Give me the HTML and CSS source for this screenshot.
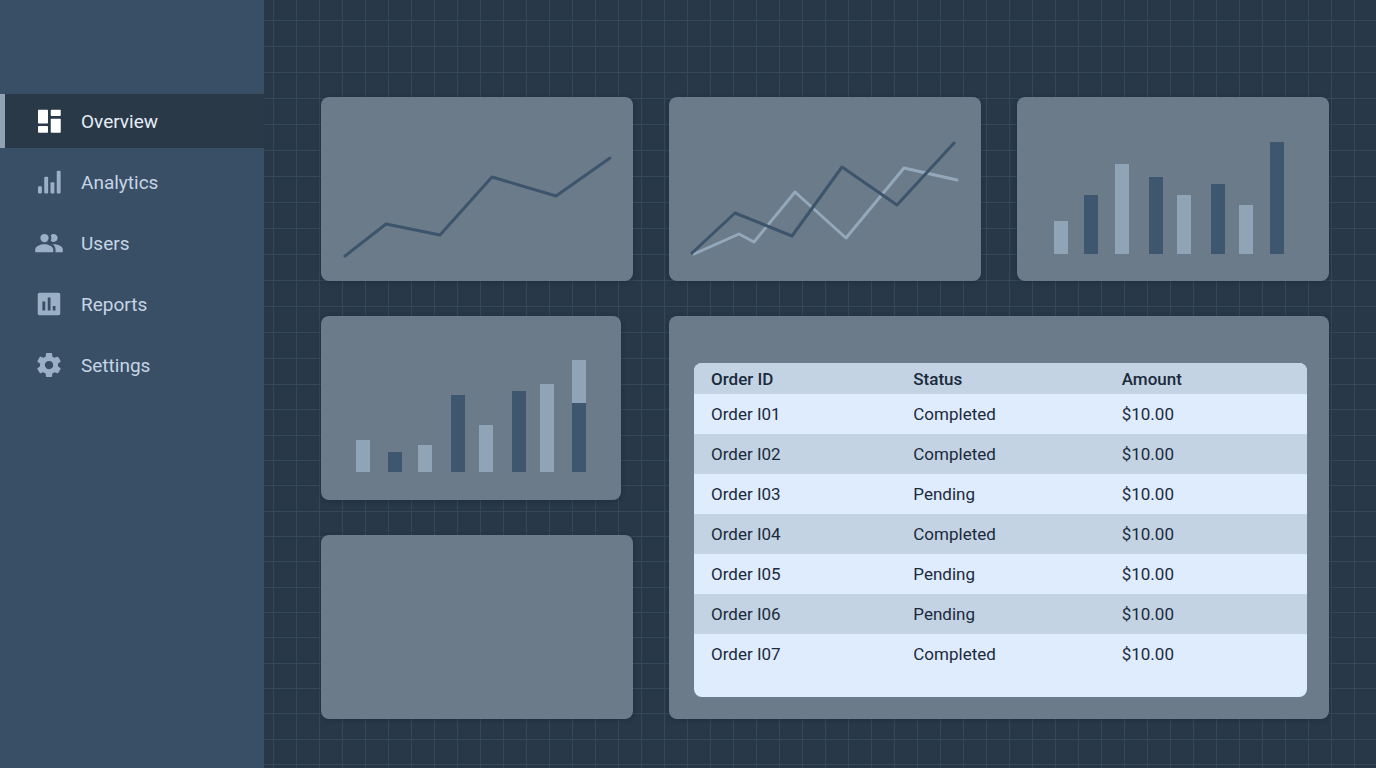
FILE: index.html
```html
<!DOCTYPE html>
<html lang="en">
<head>
    <meta charset="UTF-8" />
    <meta name="viewport" content="width=device-width, initial-scale=1.0"/>
    <title>Dashboard</title>
    <link rel="stylesheet" href="styles.css">
</head>
<body>

    <!-- Sidebar -->
    <nav class="sidebar" aria-label="Main">
        <a href="#overview" class="nav-item active" aria-current="page">
            <svg class="nav-icon" viewBox="0 0 24 24" aria-hidden="true">
                <rect x="3.2" y="3" width="8" height="11" rx="0.6"/>
                <rect x="3.2" y="16" width="8" height="5.400" rx="0.6"/>
                <rect x="13.400" y="3" width="8" height="5" rx="0.6"/>
                <rect x="13.400" y="10.200" width="8" height="11.200" rx="0.6"/>
            </svg>
            Overview
        </a>
        <a href="#analytics" class="nav-item">
            <svg class="nav-icon" viewBox="0 0 24 24" aria-hidden="true">
                <rect x="3.2" y="15.4" width="3.1" height="5.8" rx="0.8"/>
                <rect x="8.2" y="7.8" width="3.1" height="13.4" rx="0.8"/>
                <rect x="13.2" y="12.2" width="3.1" height="9" rx="0.8"/>
                <rect x="18.2" y="3" width="3.1" height="18.2" rx="0.8"/>
            </svg>
            Analytics
        </a>
        <a href="#users" class="nav-item">
            <svg class="nav-icon" viewBox="0 0 24 24" aria-hidden="true">
                <circle cx="8.4" cy="8" r="3.3"/>
                <path d="M13.400 10.200a4.800 4.800 0 0 0 0-4.400 3.200 3.200 0 1 1 0 4.400z"/>
                <path d="M1 19.3V17c0-2.4 4.4-4 7.2-4s7.2 1.600 7.200 4v2.300z"/>
                <path d="M17.200 19.300V17c0-1.600-.8-2.900-2-3.900 3.400-.1 7.800 1.300 7.800 3.900v2.300z"/>
            </svg>
            Users
        </a>
        <a href="#reports" class="nav-item">
            <svg class="nav-icon" viewBox="0 0 24 24" aria-hidden="true">
                <path d="M19.600 3H4.400C3.600 3 3 3.600 3 4.400v15.200c0 .8.6 1.400 1.400 1.400h15.200c.8 0 1.400-.6 1.400-1.400V4.400c0-.8-.6-1.400-1.400-1.400zM9 17.200H6.700V10H9v7.200zm4.200 0H11V6.800h2.200v10.400zm4 0H15v-3.700h2.200v3.700z"/>
            </svg>
            Reports
        </a>
        <a href="#settings" class="nav-item">
            <svg class="nav-icon" viewBox="0 0 24 24" aria-hidden="true">
                <path d="M19.140 12.940c.04-.3.060-.61.060-.94 0-.32-.02-.64-.07-.94l2.030-1.580c.18-.14.230-.41.120-.61l-1.920-3.320c-.12-.22-.37-.29-.59-.22l-2.390.96c-.5-.38-1.030-.7-1.620-.94l-.36-2.540c-.04-.24-.24-.41-.48-.41h-3.840c-.24 0-.43.17-.47.41l-.36 2.540c-.59.240-1.130.570-1.620.94l-2.390-.96c-.22-.08-.47 0-.59.220L2.740 8.870c-.12.210-.08.470.12.610l2.030 1.580c-.05.300-.09.630-.09.940s.02.640.070.940l-2.030 1.580c-.18.140-.23.410-.12.610l1.920 3.320c.12.220.37.290.59.220l2.390-.96c.5.380 1.030.7 1.620.94l.36 2.540c.05.240.24.410.48.410h3.840c.24 0 .44-.17.470-.41l.36-2.540c.59-.24 1.130-.56 1.620-.94l2.390.96c.22.080.47 0 .59-.22l1.920-3.320c.12-.22.070-.47-.12-.61l-2.010-1.580zM12 15.300A3.300 3.300 0 1 1 12 8.700a3.300 3.300 0 0 1 0 6.600z"/>
            </svg>
            Settings
        </a>
    </nav>

    <!-- Cards -->
    <main class="dashboard">
        <section class="card">
            <svg class="chart" viewBox="0 0 312 184" role="img" aria-label="Line chart">
                <polyline class="line-dark" points="24,159 65,127 119,138 171,80 235,99 289,61"/>
            </svg>
        </section>

        <section class="card">
            <svg class="chart" viewBox="0 0 312 184" role="img" aria-label="Line chart with two series">
                <polyline class="line-light" points="25,157 70,137 85,145 126,95 177,141 235,71 288,83"/>
                <polyline class="line-dark" points="23,156 66,116 123,139 173,70 228,108 285,46"/>
            </svg>
        </section>

        <section class="card">
            <svg class="chart" viewBox="0 0 312 184" role="img" aria-label="Bar chart">
                <rect class="bar-light" x="37" y="124" width="14" height="33"/>
                <rect class="bar-dark" x="67" y="98" width="14" height="59"/>
                <rect class="bar-light" x="98" y="67" width="14" height="90"/>
                <rect class="bar-dark" x="132" y="80" width="14" height="77"/>
                <rect class="bar-light" x="160" y="98" width="14" height="59"/>
                <rect class="bar-dark" x="194" y="87" width="14" height="70"/>
                <rect class="bar-light" x="222" y="108" width="14" height="49"/>
                <rect class="bar-dark" x="253" y="45" width="14" height="112"/>
            </svg>
        </section>

        <section class="card card-narrow">
            <svg class="chart" viewBox="0 0 300 184" role="img" aria-label="Stacked bar chart">
                <rect class="bar-light" x="35" y="124" width="14" height="32"/>
                <rect class="bar-dark" x="67" y="136" width="14" height="20"/>
                <rect class="bar-light" x="97" y="129" width="14" height="27"/>
                <rect class="bar-dark" x="130" y="79" width="14" height="77"/>
                <rect class="bar-light" x="158" y="109" width="14" height="47"/>
                <rect class="bar-dark" x="191" y="75" width="14" height="81"/>
                <rect class="bar-light" x="219" y="68" width="14" height="88"/>
                <rect class="bar-light" x="251" y="44" width="14" height="43"/>
                <rect class="bar-dark" x="251" y="87" width="14" height="69"/>
            </svg>
        </section>

        <section class="card card-table">
            <div class="table-box">
                <table class="orders">
                    <thead>
                        <tr><th scope="col">Order ID</th><th scope="col" class="col-status">Status</th><th scope="col">Amount</th></tr>
                    </thead>
                    <tbody>
                        <tr><td>Order I01</td><td>Completed</td><td>$10.00</td></tr>
                        <tr><td>Order I02</td><td>Completed</td><td>$10.00</td></tr>
                        <tr><td>Order I03</td><td>Pending</td><td>$10.00</td></tr>
                        <tr><td>Order I04</td><td>Completed</td><td>$10.00</td></tr>
                        <tr><td>Order I05</td><td>Pending</td><td>$10.00</td></tr>
                        <tr><td>Order I06</td><td>Pending</td><td>$10.00</td></tr>
                        <tr><td>Order I07</td><td>Completed</td><td>$10.00</td></tr>
                    </tbody>
                </table>
            </div>
        </section>

        <section class="card"></section>
    </main>

</body>
</html>
```
FILE: styles.css
```css
* {
    box-sizing: border-box;
}

body {
    margin: 0;
    min-height: 100vh;
    display: flex;
    background: #283848;
    font-family: Roboto, 'Liberation Sans', sans-serif;
}

/* Sidebar */
.sidebar {
    flex: 0 0 264px;
    display: flex;
    flex-direction: column;
    gap: 7px;
    padding-top: 94px;
    background: #394f66;
}

.nav-item {
    display: flex;
    align-items: center;
    gap: 17px;
    height: 54px;
    padding-left: 29px;
    border-left: 5px solid transparent;
    color: #c6d5e5;
    font-size: 19px;
    text-decoration: none;
}

.nav-item:hover {
    background: #324659;
}

.nav-item.active {
    background: #293948;
    border-left-color: #8fa3b5;
    color: #e6eef8;
}

.nav-icon {
    width: 30px;
    height: 30px;
    fill: #9bb0c4;
}

.active .nav-icon {
    fill: #fff;
}

/* Main area with the grid paper behind the cards */
.dashboard {
    flex: 1;
    display: grid;
    grid-template-columns: repeat(3, minmax(0, 1fr));
    grid-template-rows: repeat(3, minmax(184px, 1fr));
    gap: 35px 36px;
    padding: 97px 47px 49px 57px;
    background-image:
        linear-gradient(90deg, #364858 1px, transparent 1px),
        repeating-linear-gradient(#364858 0 1px, transparent 1px 26px),
        repeating-linear-gradient(#364858 0 1px, transparent 1px 25px, #364858 25px 26px, transparent 26px 51px, #364858 51px 52px, transparent 52px 76px);
    background-size: 23px 100%, 100% 364px, 100% 100%;
    background-position: 9px 0, 0 20px, 0 384px;
    background-repeat: repeat-x, no-repeat, no-repeat;
}

.card {
    background: #6c7b8a;
    border-radius: 8px;
    box-shadow: 0 1px 4px rgba(20, 32, 46, 0.4);
}

.card-narrow {
    margin-right: 12px;
}

.card-table {
    grid-column: span 2;
    grid-row: span 2;
    padding: 47px 22px 22px 25px;
}

/* Charts */
.chart {
    display: block;
    width: 100%;
    height: 100%;
}

.line-dark,
.line-light {
    fill: none;
    stroke-width: 3;
    stroke-linecap: round;
    stroke-linejoin: round;
}

.line-dark { stroke: #3c546c; }
.line-light { stroke: #93a8ba; }
.bar-dark { fill: #3e566e; }
.bar-light { fill: #8fa5b7; }

/* Orders table */
.table-box {
    height: 100%;
    background: #deecfe;
    border-radius: 8px;
    overflow: hidden;
}

.orders {
    width: 100%;
    table-layout: fixed;
    border-collapse: collapse;
    color: #1b2a3c;
    font-size: 17px;
}

.orders th,
.orders td {
    height: 40px;
    padding: 0 0 0 17px;
    text-align: left;
}

.orders th {
    height: 31px;
    background: #c3d3e3;
    font-weight: 500;
}

.orders .col-status {
    width: 34%;
}

.orders tbody tr:nth-child(even) {
    background: #c3d3e3;
}
```
